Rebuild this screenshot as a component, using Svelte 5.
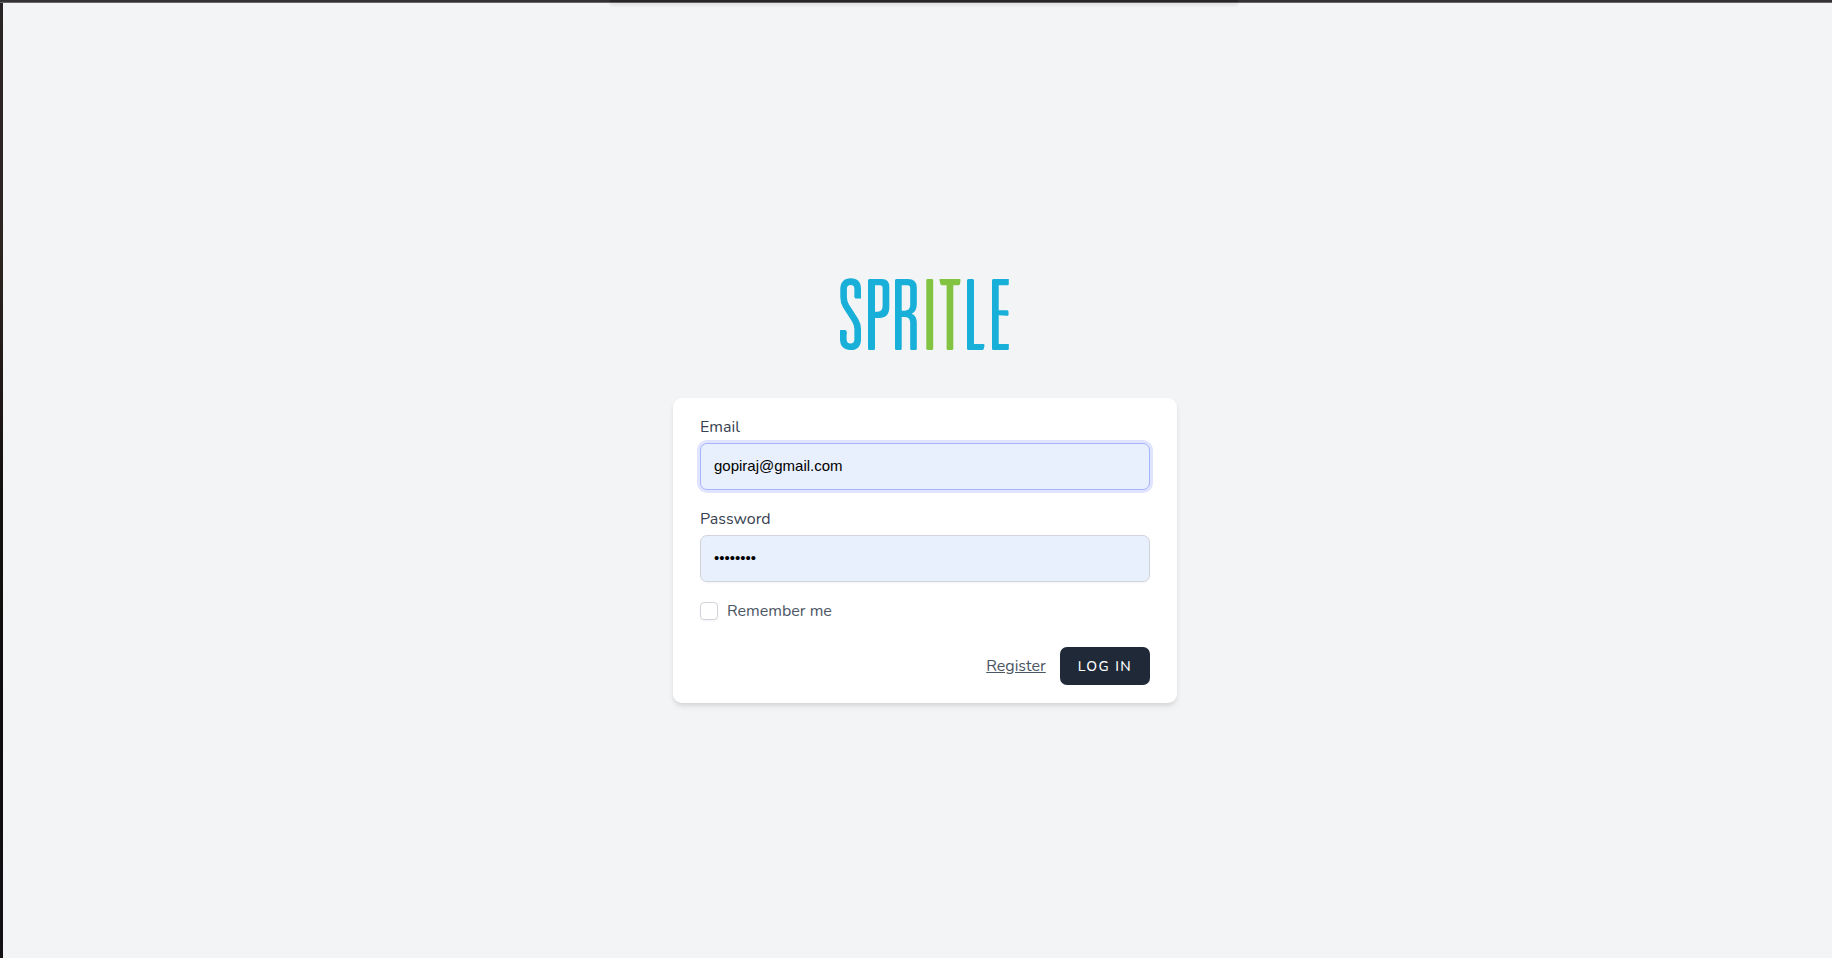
<script>
  let email = $state('gopiraj@gmail.com');
  let password = $state('password');
  let remember = $state(false);
</script>

<div class="page">
  <div class="tab-edge"></div>
  <a class="logo" href="/" aria-label="Spritle">
    <svg width="172" height="75" viewBox="0 0 172 75" fill="none" stroke-width="6.6" stroke-linejoin="round" aria-hidden="true">
      <g stroke="#18afd8">
        <path d="M15.6 18.5H22V21.2Q22 21.6 21 21.6H17Q15.6 21.6 15.6 20ZM1 53.3Q1 52.9 2 52.9H6Q7.6 52.9 7.6 54.5V57H1Z" fill="#18afd8" stroke="none" />
        <path d="M18.7 20V12Q18.7 4.6 11.7 4.6Q4.6 4.6 4.6 12V20Q4.6 25 7 29L16 43Q18.7 47.5 18.7 52V62Q18.7 69.8 11.5 69.8Q4.3 69.8 4.3 62V55" />
      </g>
      <g fill="#18afd8">
        <path fill-rule="evenodd" d="M30.5 2H43Q50.3 2 50.3 10V30Q50.3 41 40 41H36V71.7Q36 73 34.5 73H30.5Q29 73 29 71.5V3.5Q29 2 30.5 2ZM36 8.3V34.7H38.5Q43.6 34.7 43.6 29V11Q43.6 8.3 41 8.3Z" />
        <path fill-rule="evenodd" d="M57.3 2H69Q77.8 2 77.8 10.5V27Q77.8 34.5 72.7 36.8Q77.8 38.8 77.8 46V71.7Q77.8 73 76.3 73H72.5Q71.2 73 71.2 71.5V46Q71.2 40 66 40H62.7V71.7Q62.7 73 61.3 73H57.3Q56 73 56 71.5V3.5Q56 2 57.3 2ZM62.7 8.3V33.7H65.5Q71.2 33.7 71.2 28V11Q71.2 8.3 68.5 8.3Z" />
        <path d="M129.5 2H133.7Q135 2 135 3.5V67H144.5Q145.7 67 145.5 68.5L144.8 71.7Q144.5 73 143 73H129.5Q128 73 128 71.5V3.5Q128 2 129.5 2Z" />
        <path d="M154.3 2H169.8V7.3Q169.8 8.3 168.5 8.3H159.7V33.3H168.3Q169.5 33.3 169.5 34.8V38Q169.5 39 168 38.8L159.7 38.3V67H169.8V72Q169.8 73 168.5 73H154.3Q153 73 153 71.5V3.5Q153 2 154.3 2Z" />
      </g>
      <g fill="#82c341">
        <rect x="87.3" y="2" width="6.9" height="71" rx="1.4" />
        <path d="M101 2H120.7Q121.8 2 121.5 3.5L121 7Q120.7 8.3 119.3 8.3H114.3V71.7Q114.3 73 113 73H109Q107.6 73 107.6 71.5V8.3H103Q101.7 8.3 101.4 7L100.5 3.3Q100.2 2 101 2Z" />
      </g>
    </svg>
  </a>

  <form class="card" onsubmit={(e) => e.preventDefault()}>
    <div class="field">
      <label for="email">Email</label>
      <input class="box active" id="email" type="email" bind:value={email} />
    </div>
    <div class="field">
      <label for="password">Password</label>
      <input class="box" id="password" type="password" bind:value={password} />
    </div>
    <label class="remember" for="remember">
      <input id="remember" type="checkbox" bind:checked={remember} />
      <span>Remember me</span>
    </label>
    <div class="actions">
      <a href="/register">Register</a>
      <button type="submit">Log in</button>
    </div>
  </form>
</div>

<style>
  :global(body) {
    margin: 0;
    background: #f3f4f6;
  }
  .page {
    box-sizing: border-box;
    position: relative;
    min-height: 100vh;
    padding-left: 18px;
    display: flex;
    flex-direction: column;
    align-items: center;
    justify-content: center;
    font-family: Nunito, "Noto Sans", sans-serif;
    font-size: 16px;
    line-height: 23px;
    color: #374151;
    background:
      linear-gradient(#343232 0 2px, #67676a 2px 3px) top / 100% 3px no-repeat,
      linear-gradient(#292425, #2d2522 25%, #15110f 50%, #0e0c0e 75%, #131116) left / 3px 100% no-repeat,
      #f3f4f6;
  }
  .tab-edge {
    position: absolute;
    top: 0;
    left: 33.3%;
    right: 32.4%;
    height: 2px;
    background: #272525;
    box-shadow: 0 2px 4px rgba(0, 0, 0, 0.2);
  }
  .logo {
    padding: 22px 0 46px;
  }
  .logo svg {
    display: block;
  }
  .card {
    box-sizing: border-box;
    width: 100%;
    max-width: 504px;
    padding: 18px 27px;
    border-radius: 9px;
    background: #fff;
    box-shadow: 0 4px 6px -1px rgba(0, 0, 0, 0.1), 0 2px 4px -1px rgba(0, 0, 0, 0.06);
  }
  .field {
    display: flex;
    flex-direction: column;
    gap: 4px;
    margin-bottom: 18px;
  }
  .box {
    box-sizing: border-box;
    width: 100%;
    height: 47px;
    padding: 0 13px 2px;
    border: 1px solid #d1d5db;
    border-radius: 7px;
    outline: 0;
    background: #e8effd;
    color: #000;
    font: 15px "Liberation Sans", Arial, sans-serif;
    box-shadow: 0 1px 2px rgba(0, 0, 0, 0.05);
  }
  .box.active,
  .box:focus {
    border-color: #a5b4fc;
    box-shadow: 0 0 0 3px #e0e4fe;
  }
  .remember {
    display: flex;
    align-items: center;
    gap: 9px;
    width: fit-content;
    line-height: 22px;
    color: #4b5563;
  }
  .remember input {
    appearance: none;
    box-sizing: border-box;
    width: 18px;
    height: 18px;
    margin: 0;
    border: 1px solid #d1d5db;
    border-radius: 4px;
    background: #fff;
    box-shadow: 0 1px 2px rgba(0, 0, 0, 0.05);
  }
  .remember input:checked {
    background: #4f46e5;
  }
  .actions {
    display: flex;
    align-items: center;
    justify-content: flex-end;
    gap: 14px;
    margin-top: 25px;
  }
  .actions a {
    color: #4b5563;
  }
  .actions button {
    height: 38px;
    padding: 0 18px;
    border: 0;
    border-radius: 7px;
    background: #1f2937;
    color: #fff;
    font: 500 14px Nunito, "Noto Sans", sans-serif;
    letter-spacing: 0.1em;
    text-transform: uppercase;
  }
</style>
